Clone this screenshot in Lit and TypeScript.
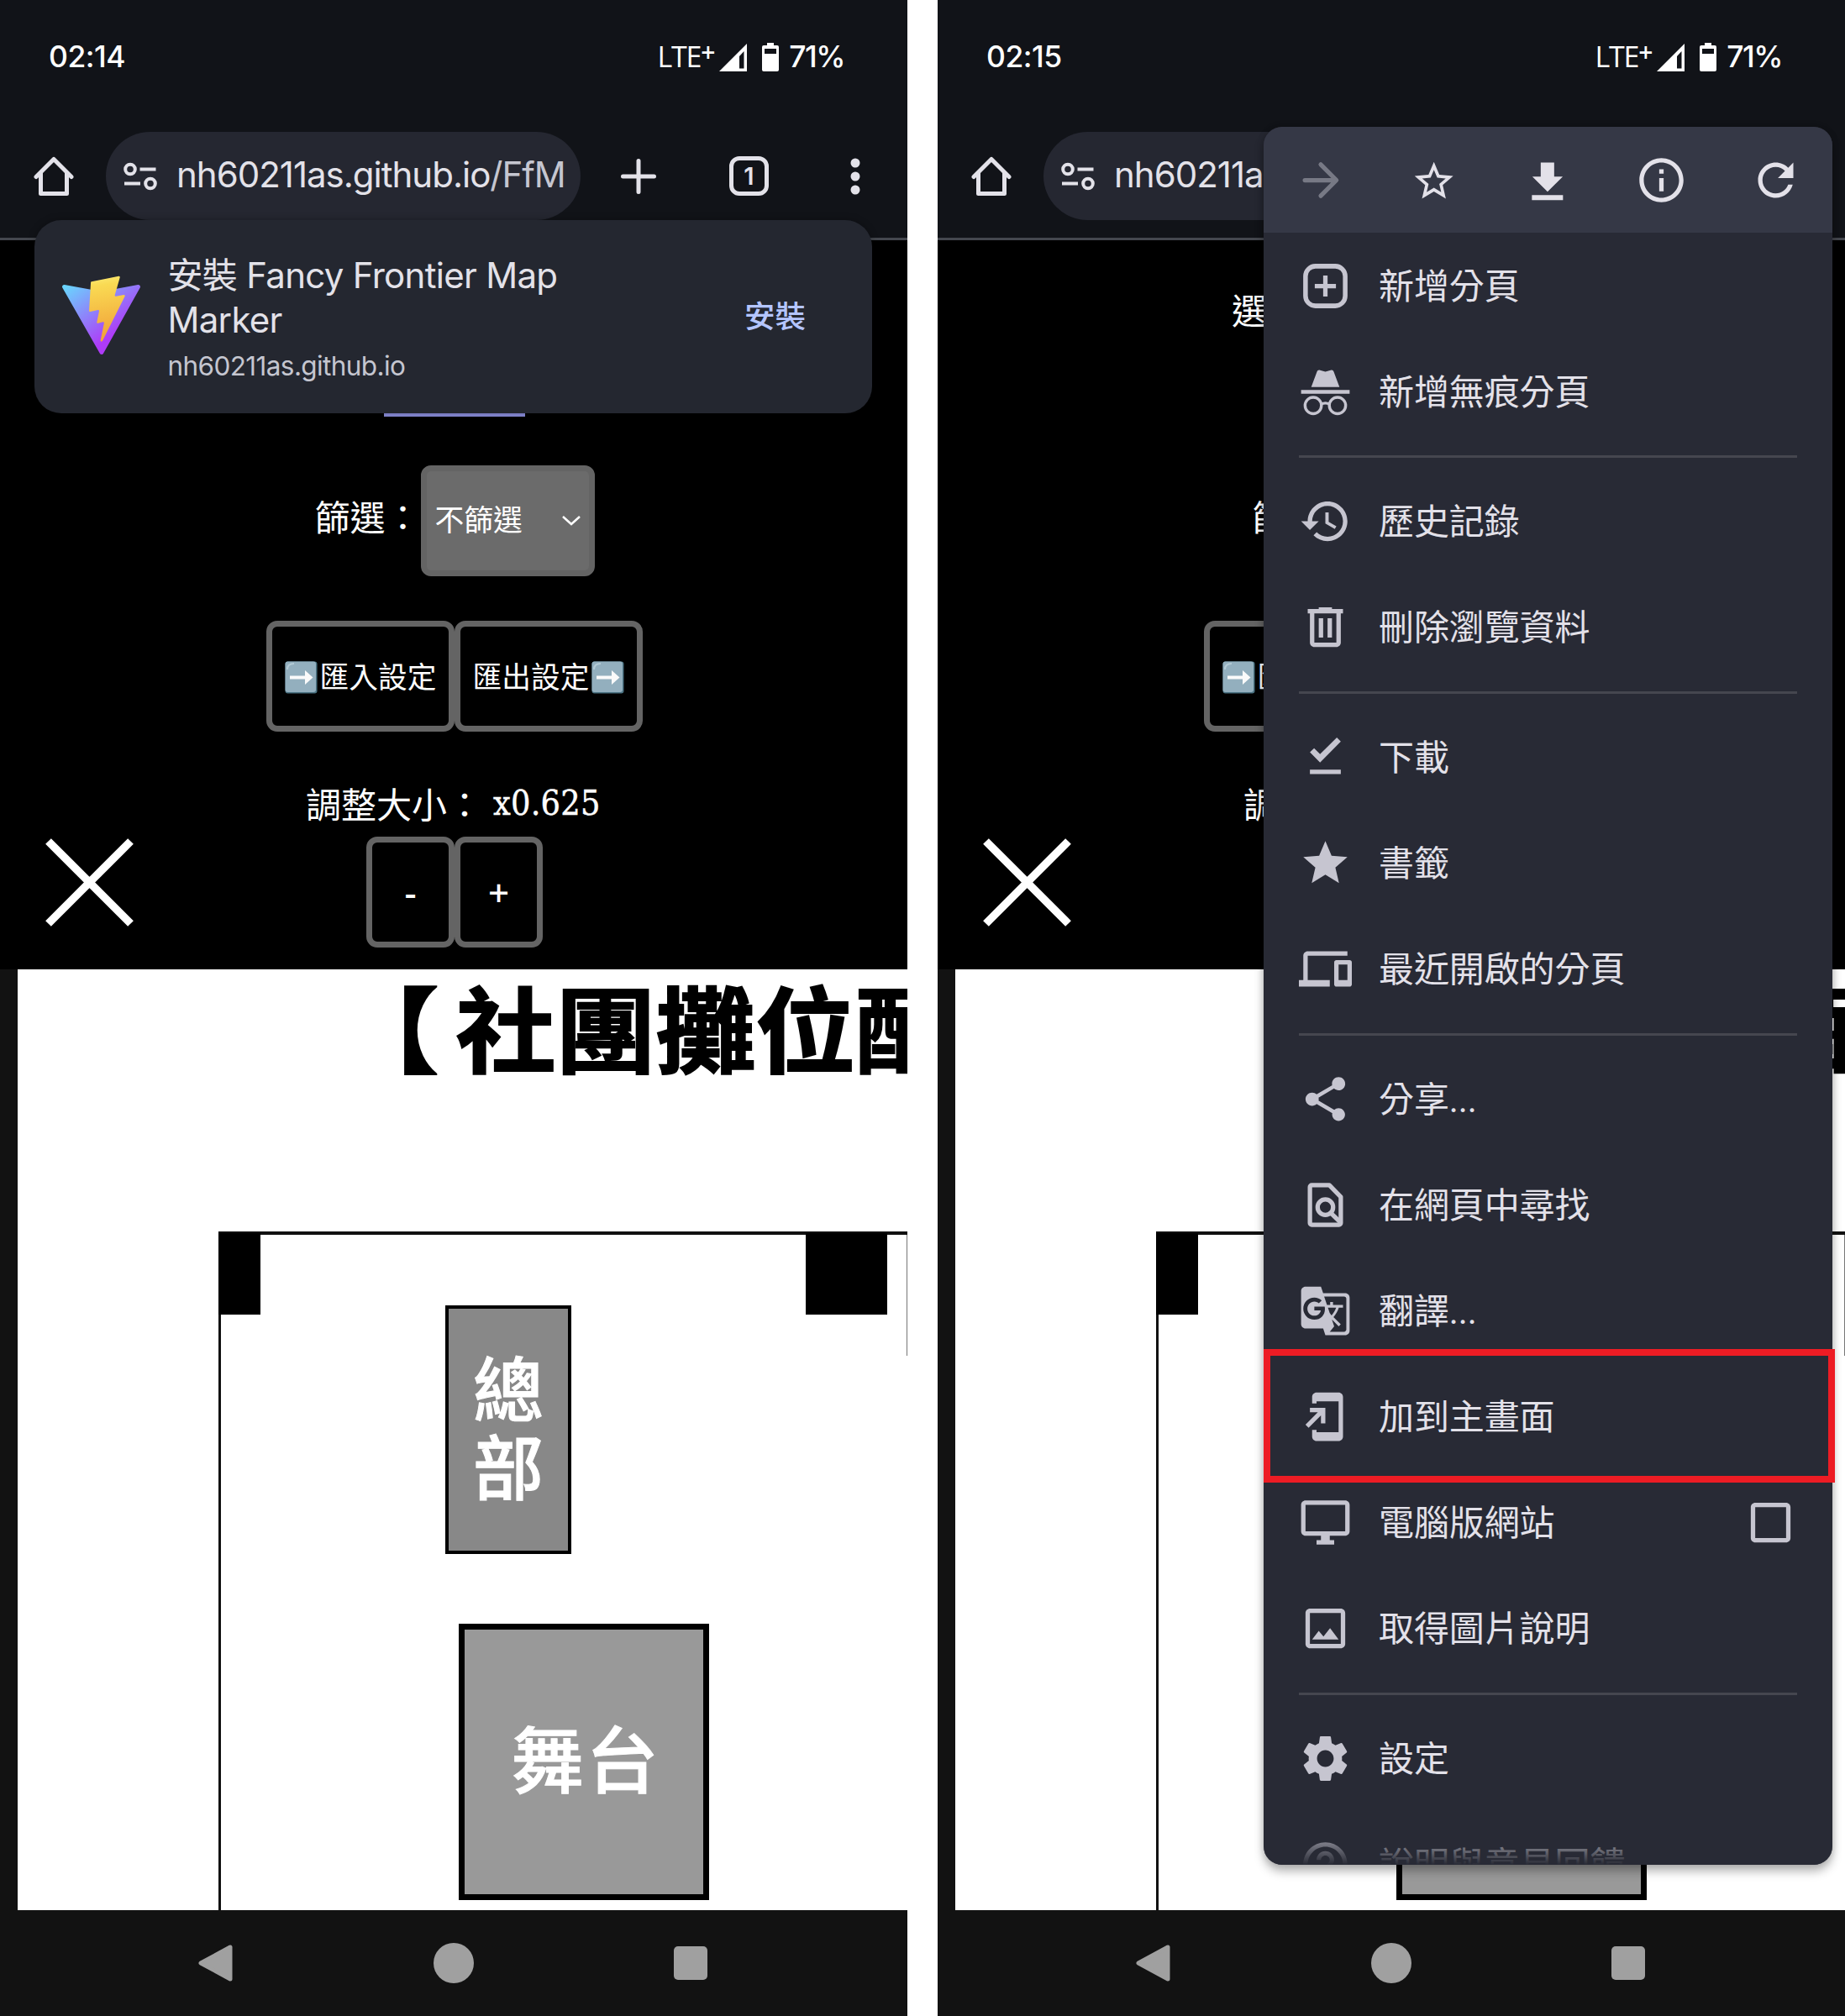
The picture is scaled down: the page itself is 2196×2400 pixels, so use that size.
import { LitElement, html, svg, css } from "lit";
import { customElement, property } from "lit/decorators.js";

const icon = (name: string) => {
  const body: Record<string, unknown> = {
    forward: svg`<path d="M5 12H19M12.2 4.9 19.3 12l-7.1 7.1" fill="none" stroke="currentColor" stroke-width="2" stroke-linecap="round" stroke-linejoin="round"/>`,
    starLine: svg`<path d="M22 9.24l-7.19-.62L12 2 9.19 8.63 2 9.24l5.46 4.73L5.82 21 12 17.27 18.18 21l-1.63-7.03L22 9.24zM12 15.4l-3.76 2.27 1-4.28-3.32-2.88 4.38-.38L12 6.1l1.71 4.04 4.38.38-3.32 2.88 1 4.28L12 15.4z" transform="translate(1.2 2) scale(.875)"/>`,
    save: svg`<path d="M18.700 10.400h-3.900V4H8.700v6.400H4.900l6.900 6.800zM4.700 18.800v2.200h14.100v-2.200z" />`,
    info: svg`<path d="M11 7h2v2h-2zm0 4h2v6h-2zm1-9C6.480 2 2 6.480 2 12s4.480 10 10 10 10-4.480 10-10S17.520 2 12 2zm0 18c-4.410 0-8-3.590-8-8s3.590-8 8-8 8 3.590 8 8-3.590 8-8 8z"/>`,
    reload: svg`<path d="M17.650 6.350C16.200 4.900 14.210 4 12 4c-4.420 0-7.990 3.580-7.990 8s3.570 8 7.990 8c3.730 0 6.840-2.550 7.730-6h-2.080c-.82 2.330-3.040 4-5.650 4-3.310 0-6-2.690-6-6s2.690-6 6-6c1.660 0 3.140.69 4.220 1.780L13 11h7V4l-2.350 2.350z"/>`,
    newTab: svg`<rect x="3" y="3" width="18" height="18" rx="4.500" fill="none" stroke="currentColor" stroke-width="2.100"/><path d="M11 7.200h2V11h3.800v2H13v3.800h-2V13H7.200v-2H11z"/>`,
    incognito: svg`<path d="M8.200 2.900C8.400 2.200 9 1.900 9.600 2.200L12 2.900l2.400-.7c.6-.3 1.200 0 1.400.7L18.400 9.800H5.600zM1 11.100h22v1.800H1z"/><g fill="none" stroke="currentColor" stroke-width="1.300"><circle cx="6.500" cy="18.200" r="3.700"/><circle cx="17.500" cy="18.200" r="3.700"/><path d="M10.100 17.600q1.900-1 3.800 0"/></g>`,
    history: svg`<path d="M13 3c-4.970 0-9 4.030-9 9H1l3.890 3.890.07.14L9 12H6c0-3.870 3.130-7 7-7s7 3.130 7 7-3.130 7-7 7c-1.930 0-3.680-.79-4.940-2.060l-1.420 1.420C8.270 19.990 10.510 21 13 21c4.970 0 9-4.030 9-9s-4.030-9-9-9zm-1 5v5l4.280 2.540.72-1.210-3.500-2.080V8H12z"/>`,
    trash: svg`<path d="M15 3.800V3H9v.8H4v2h1V19c0 1.100.9 2 2 2h10c1.100 0 2-.9 2-2V5.800h1v-2zM17 19H7V5.800h10zM9 8h2v8.800H9zm4 0h2v8.800h-2z"/>`,
    done: svg`<path d="M19 4.900 17.200 3 9.600 10.600 6.900 7.900 5 9.700l4.600 4.700zM5 17.600h14v2H5z" />`,
    star: svg`<path d="M12 17.270 18.180 21l-1.640-7.030L22 9.240l-7.190-.61L12 2 9.190 8.630 2 9.240l5.460 4.730L5.820 21z"/>`,
    devices: svg`<path d="M4 6h18V4H4c-1.100 0-2 .9-2 2v11H0v3h14v-3H4V6zm19 2h-6c-.55 0-1 .45-1 1v10c0 .55.45 1 1 1h6c.55 0 1-.45 1-1V9c0-.55-.45-1-1-1zm-1 9h-4v-7h4v7z"/>`,
    share: svg`<path d="M18 16.080c-.76 0-1.440.3-1.960.77L8.910 12.700c.05-.23.090-.46.090-.7s-.040-.47-.090-.7l7.050-4.110c.54.5 1.250.81 2.040.81 1.660 0 3-1.340 3-3s-1.340-3-3-3-3 1.340-3 3c0 .24.040.47.090.7L8.040 9.810C7.500 9.310 6.790 9 6 9c-1.660 0-3 1.340-3 3s1.340 3 3 3c.79 0 1.500-.31 2.040-.81l7.120 4.160c-.05.21-.08.43-.08.65 0 1.610 1.310 2.920 2.920 2.920s2.920-1.310 2.920-2.920-1.310-2.920-2.920-2.920z"/>`,
    find: svg`<path d="M13.800 3 19 8.300V20.200c0 .4-.4.8-.8.800H5.800c-.4 0-.8-.4-.8-.8V3.800c0-.4.4-.8.800-.8z" fill="none" stroke="currentColor" stroke-width="2" stroke-linejoin="round"/><circle cx="12" cy="13" r="3.500" fill="none" stroke="currentColor" stroke-width="2"/><path d="m14.300 15.500 4.600 4.400" stroke="currentColor" stroke-width="2"/>`,
    translate: svg`<path d="M21 4H11l-1-3H3c-1.100 0-2 .9-2 2v15c0 1.100.9 2 2 2h8l1 3h9c1.100 0 2-.9 2-2V6c0-1.100-.9-2-2-2zM7 16c-2.760 0-5-2.240-5-5s2.240-5 5-5c1.350 0 2.480.5 3.350 1.300L9.030 8.570c-.38-.36-1.040-.78-2.030-.78-1.740 0-3.150 1.440-3.150 3.210S5.260 14.210 7 14.210c2.010 0 2.840-1.440 2.920-2.410H7v-1.710h4.680c.07.31.12.61.12 1.020C11.800 13.970 9.890 16 7 16zm6.170-5.420h3.700c-.43 1.250-1.110 2.430-2.050 3.470-.31-.35-.6-.72-.86-1.100l-.79-2.370zm8.330 9.920c0 .55-.45 1-1 1H14l2-2.500-1.040-3.100 3.100 3.100.92-.92-3.300-3.250.02-.02c1.130-1.250 1.930-2.690 2.400-4.220H20v-1.300h-4.530V8h-1.290v1.290h-1.440L11.460 5.500h9.040c.55 0 1 .45 1 1v14z"/>`,
    addHome: svg`<path d="M18 1H8c-1.100 0-2 .9-2 2v3h2V5h10v14H8v-1H6v3c0 1.100.9 2 2 2h10c1.100 0 2-.9 2-2V3c0-1.100-.9-2-2-2zM10 15h2V8H5v2h3.590L3 15.590 4.410 17 10 11.410V15z"/>`,
    desktop: svg`<path d="M21 2H3c-1.100 0-2 .9-2 2v12c0 1.100.9 2 2 2h7v2H8v2h8v-2h-2v-2h7c1.100 0 2-.9 2-2V4c0-1.100-.9-2-2-2zm0 14H3V4h18v12z"/>`,
    image: svg`<path d="M19 5v14H5V5h14m0-2H5c-1.100 0-2 .9-2 2v14c0 1.100.9 2 2 2h14c1.100 0 2-.9 2-2V5c0-1.100-.9-2-2-2zm-4.860 8.860-3 3.870L9 13.140 6 17h12l-3.860-5.140z"/>`,
    settings: svg`<path d="M19.140 12.940c.04-.3.060-.61.060-.94 0-.32-.02-.64-.07-.94l2.030-1.580c.18-.14.23-.41.12-.61l-1.920-3.320c-.12-.22-.37-.29-.59-.22l-2.390.96c-.5-.38-1.030-.7-1.620-.94L14.400 2.810c-.04-.24-.24-.41-.48-.41h-3.840c-.24 0-.43.17-.47.41L9.250 5.350c-.59.24-1.130.57-1.620.94L5.240 5.330c-.22-.08-.47 0-.59.22L2.740 8.870c-.12.21-.08.47.12.61l2.030 1.580c-.05.3-.09.63-.09.94s.02.64.07.94l-2.030 1.580c-.18.14-.23.41-.12.61l1.920 3.320c.12.22.37.29.59.22l2.390-.96c.5.38 1.030.7 1.620.94l.36 2.540c.05.24.24.41.48.41h3.840c.24 0 .44-.17.47-.41l.36-2.540c.59-.24 1.130-.56 1.620-.94l2.390.96c.22.08.47 0 .59-.22l1.920-3.320c.12-.22.07-.47-.12-.61l-2.010-1.580zM12 15.600c-1.980 0-3.600-1.620-3.600-3.600s1.620-3.600 3.600-3.600 3.600 1.620 3.600 3.600-1.620 3.600-3.600 3.600z" transform="translate(-.6 -.6) scale(1.050)"/>`,
    help: svg`<path d="M11 18h2v-2h-2v2zm1-16C6.480 2 2 6.480 2 12s4.480 10 10 10 10-4.480 10-10S17.520 2 12 2zm0 18c-4.410 0-8-3.590-8-8s3.590-8 8-8 8 3.590 8 8-3.590 8-8 8zm0-14c-2.210 0-4 1.790-4 4h2c0-1.100.9-2 2-2s2 .9 2 2c0 2-3 1.750-3 5h2c0-2.250 3-2.500 3-5 0-2.210-1.790-4-4-4z"/>`,
    checkbox: svg`<path d="M19 5v14H5V5h14m0-2H5c-1.100 0-2 .9-2 2v14c0 1.100.9 2 2 2h14c1.100 0 2-.9 2-2V5c0-1.100-.9-2-2-2z"/>`,
  };
  return html`<svg class="icon" viewBox="0 0 24 24" fill="currentColor">${body[name]}</svg>`;
};

type Item = { icon: string; label: string; checkbox?: boolean };
const GROUPS: Item[][] = [
  [
    { icon: "newTab", label: "新增分頁" },
    { icon: "incognito", label: "新增無痕分頁" },
  ],
  [
    { icon: "history", label: "歷史記錄" },
    { icon: "trash", label: "刪除瀏覽資料" },
  ],
  [
    { icon: "done", label: "下載" },
    { icon: "star", label: "書籤" },
    { icon: "devices", label: "最近開啟的分頁" },
  ],
  [
    { icon: "share", label: "分享..." },
    { icon: "find", label: "在網頁中尋找" },
    { icon: "translate", label: "翻譯..." },
    { icon: "addHome", label: "加到主畫面" },
    { icon: "desktop", label: "電腦版網站", checkbox: true },
    { icon: "image", label: "取得圖片說明" },
  ],
  [
    { icon: "settings", label: "設定" },
    { icon: "help", label: "說明與意見回饋" },
  ],
];

@customElement("browser-menu")
export class BrowserMenu extends LitElement {
  static styles = css`
    :host { display: block; box-sizing: border-box; font-family: Roboto, "Noto Sans CJK TC", sans-serif; }
    .menu { position: relative; width: 677px; height: 2069px; border-radius: 22px; background: #282a35; color: #e3e1e9; box-shadow: 0 8px 12px rgba(0, 0, 0, .28), 0 0 8px rgba(0, 0, 0, .14); }
    .clip { height: 100%; overflow: hidden; border-radius: 22px; }
    .head { display: flex; height: 126px; background: #353846; color: #e3e1e9; }
    .cell { flex: 1; display: flex; align-items: center; justify-content: center; }
    .dim { color: #777985; }
    .icon { width: 63px; height: 63px; display: block; flex: none; }
    .row { display: flex; align-items: center; height: 126px; padding: 0 42px; gap: 32px; font-size: 42px; line-height: 60px; white-space: nowrap; }
    .row .icon { color: #c6c5d0; }
    .label { flex: 1; padding-top: 3px; letter-spacing: -.1px; }
    .divider { height: 3px; margin: 13px 42px 12.900px; background: #45464f; }
    .fade { position: absolute; left: 0; right: 0; bottom: 0; height: 44px; border-radius: 0 0 22px 22px; background: linear-gradient(rgba(40, 42, 53, .1), #282a35); }
    .mark { position: absolute; left: 0; top: 1455px; width: 680px; height: 159px; box-sizing: border-box; border: 8px solid #ed1c24; }
  `;
  render() {
    return html`<div class="menu">
      <div class="clip">
        <div class="head">
          <div class="cell dim">${icon("forward")}</div>
          ${["starLine", "save", "info", "reload"].map((n) => html`<div class="cell">${icon(n)}</div>`)}
        </div>
        ${GROUPS.map(
          (g, i) => html`${i ? html`<div class="divider"></div>` : ""}
          ${g.map((r) => html`<div class="row">${icon(r.icon)}<span class="label">${r.label}</span>${r.checkbox ? icon("checkbox") : ""}</div>`)}`
        )}
      </div>
      <div class="fade"></div>
      <div class="mark"></div>
    </div>`;
  }
}

@customElement("install-card")
export class InstallCard extends LitElement {
  static styles = css`
    :host { display: block; font-family: Inter, "Noto Sans CJK TC", sans-serif; }
    .card { box-sizing: border-box; width: 997px; height: 230px; border-radius: 32px; background: #242730; display: flex; align-items: center; padding: 0 79px 0 33px; box-shadow: 0 0 10px rgba(0, 0, 0, .3); }
    .logo { width: 93px; height: 95px; flex: none; margin-bottom: 3px; }
    .body { flex: 1; margin-left: 32.500px; color: #e3e2e9; padding-top: 4px; }
    .title { font-size: 42px; line-height: 53px; letter-spacing: -.7px; white-space: nowrap; }
    .site { font-size: 31.500px; line-height: 44px; margin-top: 7px; color: #c5c6d0; letter-spacing: -.6px; }
    .install { font-size: 36.500px; line-height: 50px; color: #b4c5ff; font-weight: 500; }
  `;
  render() {
    return html`<div class="card">
      <svg class="logo" viewBox="0 0 256 257">
        <defs>
          <linearGradient id="a" x1="-.828%" x2="57.636%" y1="7.652%" y2="78.411%"><stop offset="0%" stop-color="#6AD4FD"/><stop offset="100%" stop-color="#AE3BF7"/></linearGradient>
          <linearGradient id="b" x1="43.376%" x2="50.316%" y1="2.242%" y2="89.030%"><stop offset="0%" stop-color="#FBE56A"/><stop offset="12%" stop-color="#F9DA53"/><stop offset="100%" stop-color="#F2A53A"/></linearGradient>
        </defs>
        <path fill="url(#a)" d="M255.153 37.938 134.897 252.976c-2.483 4.440-8.862 4.466-11.382.048L.875 37.958c-2.746-4.814 1.371-10.646 6.827-9.670l120.385 21.517a6.537 6.537 0 0 0 2.322-.004l117.867-21.483c5.438-.991 9.574 4.796 6.877 9.620Z"/>
        <path fill="url(#b)" d="M185.432.063 96.440 17.501a3.268 3.268 0 0 0-2.634 3.014l-5.474 92.456a3.268 3.268 0 0 0 3.997 3.378l24.777-5.718c2.318-.535 4.413 1.507 3.936 3.838l-7.361 36.047c-.495 2.426 1.782 4.500 4.151 3.780l15.304-4.649c2.372-.720 4.652 1.360 4.150 3.788l-11.698 56.621c-.732 3.542 3.979 5.473 5.943 2.437l1.313-2.028 72.516-144.720c1.215-2.423-.880-5.186-3.540-4.672l-25.505 4.922c-2.396.462-4.435-1.770-3.759-4.114l16.646-57.705c.677-2.350-1.370-4.583-3.769-4.113Z"/>
      </svg>
      <div class="body">
        <div class="title">安裝 Fancy Frontier Map</div>
        <div class="title">Marker</div>
        <div class="site">nh60211as.github.io</div>
      </div>
      <div class="install">安裝</div>
    </div>`;
  }
}

@customElement("phone-screen")
export class PhoneScreen extends LitElement {
  @property() time = "";
  @property() overlay = "";
  static styles = css`
    :host { display: block; width: 1080px; height: 2400px; position: relative; overflow: hidden; font-family: Inter, "Noto Sans CJK TC", sans-serif; background: #000; color: #fff; }
    .top { box-sizing: border-box; height: 286px; background: #111318; border-bottom: 3px solid #44474e; }
    .status { height: 136px; box-sizing: border-box; padding: 0 75px 0 58px; display: flex; align-items: center; font-size: 35.500px; font-weight: 500; line-height: 40px; letter-spacing: -.5px; }
    .clock { flex: 1; }
    .lte { font-family: "Open Sans", sans-serif; font-weight: 400; font-size: 34px; letter-spacing: -1.200px; }
    .sup { font-size: 30px; position: relative; top: -7px; font-weight: 600; }
    .signal { width: 33px; height: 33px; margin-left: 6px; }
    .battery { width: 20px; height: 34px; margin: 0 12px 0 18px; }
    .pct { letter-spacing: -1.500px; }
    .bar { height: 147px; display: flex; align-items: center; color: #e3e2e9; }
    .home { width: 48px; height: 48px; margin-left: 39.500px; }
    .pill { box-sizing: border-box; width: 565px; height: 105px; margin-left: 38.500px; border-radius: 53px; background: #252731; display: flex; align-items: center; padding-left: 21px; }
    .tune { width: 40px; height: 34px; }
    .url { margin-left: 23px; padding-bottom: 3px; font-size: 42px; line-height: 56px; letter-spacing: -1px; white-space: nowrap; }
    .path { color: #c5c6d0; }
    .plus { width: 42px; height: 42px; margin-left: 47.500px; }
    .tab { box-sizing: border-box; width: 47px; height: 47px; margin-left: 87.500px; border: 5px solid; border-radius: 12px; display: flex; align-items: center; justify-content: center; font-size: 29px; font-weight: 600; line-height: 30px; }
    .dots { width: 12px; height: 44px; margin-left: 96.500px; }
    .page { height: 868px; position: relative; font-family: "Noto Sans CJK TC", sans-serif; font-size: 42px; line-height: 60px; display: flex; flex-direction: column; }
    .pick { padding: 52px 0 0 350px; height: 152px; box-sizing: border-box; }
    .underline { width: 168px; height: 58px; margin-left: 457px; box-sizing: border-box; border-bottom: 4px solid #8b8ddc; }
    .line { display: flex; justify-content: center; align-items: center; }
    .filter { margin-top: 58px; height: 132px; padding: 0 0 0 2px; }
    .filter .name { padding-bottom: 13px; }
    .select { box-sizing: border-box; width: 207px; height: 132px; border: 7px solid #646464; border-radius: 12px; background: #6b6b6b; display: flex; align-items: center; font-size: 34.800px; padding: 0 10px 7px 10px; justify-content: space-between; }
    .chev { width: 22px; height: 13px; margin-top: 6px; }
    .io { margin-top: 53px; padding-left: 2px; }
    .btn { box-sizing: border-box; height: 132px; border: 7px solid #646464; border-radius: 13px; display: flex; align-items: center; justify-content: center; font-size: 34.700px; }
    .wide { width: 224px; gap: 3px; }
    .wide span { padding-bottom: 2px; }
    .arrow { width: 39px; height: 39px; flex: none; margin-top: 2px; }
    .size { margin-top: 55px; height: 60px; justify-content: flex-start; padding-left: 364px; }
    .factor { font-family: "DejaVu Serif Condensed", "DejaVu Serif", serif; font-stretch: condensed; font-size: 41px; margin-left: 13px; letter-spacing: .2px; -webkit-text-stroke: .4px #fff; }
    .zoom { margin-top: 10px; padding-left: 2px; }
    .small { width: 105px; font-family: "Noto Sans", sans-serif; font-weight: 500; font-size: 44px; padding-bottom: 1px; }
    .close { position: absolute; left: 54px; top: 712px; width: 105px; height: 105px; }
    .map { position: relative; height: 1120px; overflow: hidden; background: #fff; border-left: 21px solid #121212; color: #000; font-family: "Noto Sans CJK TC", sans-serif; }
    .map > * { position: absolute; box-sizing: border-box; }
    .heading { left: 402px; top: -16px; font-size: 111px; font-weight: 700; line-height: 165px; white-space: nowrap; transform: scaleX(1.070); transform-origin: 0 50%; display: flex; -webkit-text-stroke: 2px #000; }
    .bracket { width: 112px; margin: 0 19px 0 -19px; text-align: right; }
    .hall { left: 239px; top: 312px; width: 860px; height: 900px; border: 3px solid #111; border-top-width: 4px; }
    .pillar { top: 314px; height: 97px; background: #000; }
    .p1 { left: 239px; width: 50px; }
    .p2 { left: 938px; width: 97px; }
    .edge { left: 1058px; top: 316px; width: 1px; height: 144px; background: #777; }
    .hq { left: 509px; top: 400px; width: 150px; height: 296px; border: 4px solid #000; background: #888; color: #fff; font-weight: 500; font-size: 84px; line-height: 93px; display: flex; flex-direction: column; align-items: center; justify-content: center; padding-bottom: 12px; -webkit-text-stroke: 1px #fff; }
    .stage { left: 525px; top: 779px; width: 298px; height: 329px; border: 7px solid #000; background: #999; color: #fff; font-weight: 500; font-size: 86px; letter-spacing: 3px; display: flex; align-items: center; justify-content: center; padding: 0 0 15px 5px; -webkit-text-stroke: 1px #fff; }
    .nav { height: 126px; background: #121212; display: flex; align-items: center; color: #a0a0a0; }
    .back { width: 41px; height: 44px; margin-left: 236px; }
    .circle { width: 48px; height: 48px; border-radius: 50%; background: #a0a0a0; margin-left: 239px; }
    .square { width: 40px; height: 40px; border-radius: 5px; background: #a0a0a0; margin-left: 238px; }
    .overlay { position: absolute; }
    .card { left: 41px; top: 262px; }
    .menu { left: 388px; top: 151px; }
  `;
  private arrow() {
    return html`<svg class="arrow" viewBox="0 0 39 39"><rect x=".5" y=".5" width="38" height="38" rx="3" fill="#4b7383"/><rect x=".5" y=".5" width="36.500" height="36.500" rx="3" fill="#93afbe"/><path d="M3 10q0-7 8-7" fill="none" stroke="#b4cbd6" stroke-width="2"/><path d="M6 17.500h18v-6.500l9.500 8.500-9.500 8.500v-6.500H6z" fill="#fafafa"/></svg>`;
  }
  render() {
    return html`
      <div class="top">
        <div class="status">
          <span class="clock">${this.time}</span>
          <span class="lte">LTE<span class="sup">+</span></span>
          <svg class="signal" viewBox="0 0 33 33"><path d="M33 0V33H0zM29.500 9 24 15V29.500H29.500z" fill="#fff" fill-rule="evenodd"/></svg>
          <svg class="battery" viewBox="0 0 20 34"><path d="M6 0h8v3h4a2 2 0 0 1 2 2V32a2 2 0 0 1-2 2H2a2 2 0 0 1-2-2V5a2 2 0 0 1 2-2H6zM3 7v6h14V7z" fill="#fff" fill-rule="evenodd"/></svg>
          <span class="pct">71%</span>
        </div>
        <div class="bar">
          <svg class="home" viewBox="0 0 48 48" fill="none" stroke="currentColor" stroke-width="5" stroke-linejoin="round" stroke-linecap="round"><path d="M3 24.500 24 3.500 45 24.500M8.500 20V44.500H39.500V20"/></svg>
          <div class="pill">
            <svg class="tune" viewBox="0 0 40 34" fill="none" stroke="currentColor" stroke-width="4"><circle cx="8" cy="8.500" r="5.800"/><circle cx="32" cy="25.500" r="5.800"/><path d="M19.500 8.500H38.500M1 25.500H20"/></svg>
            <span class="url">nh60211as.github.io<span class="path">/FfM</span></span>
          </div>
          <svg class="plus" viewBox="0 0 42 42" stroke="currentColor" stroke-width="5" stroke-linecap="round"><path d="M21 2.500V39.500M2.500 21H39.500"/></svg>
          <div class="tab">1</div>
          <svg class="dots" viewBox="0 0 12 44" fill="currentColor"><circle cx="6" cy="6" r="5.500"/><circle cx="6" cy="22" r="5.500"/><circle cx="6" cy="38" r="5.500"/></svg>
        </div>
      </div>
      <div class="page">
        <div class="pick">選</div>
        <div class="underline"></div>
        <div class="line filter">
          <span class="name">篩選：</span>
          <div class="select">不篩選<svg class="chev" viewBox="0 0 22 13"><path d="M1 2 11 11 21 2" fill="none" stroke="#fff" stroke-width="2.500"/></svg></div>
        </div>
        <div class="line io">
          <div class="btn wide">${this.arrow()}<span>匯入設定</span></div>
          <div class="btn wide"><span>匯出設定</span>${this.arrow()}</div>
        </div>
        <div class="line size"><span>調整大小：</span><span class="factor">x0.625</span></div>
        <div class="line zoom"><div class="btn small">-</div><div class="btn small">+</div></div>
        <svg class="close" viewBox="0 0 105 105"><path d="M3.500 3.500 101.500 101.500M101.500 3.500 3.500 101.500" stroke="#fff" stroke-width="9.500"/></svg>
      </div>
      <div class="map">
        <div class="heading"><span class="bracket">【</span><span>社團攤位配</span></div>
        <div class="hall"></div>
        <div class="pillar p1"></div>
        <div class="pillar p2"></div>
        <div class="edge"></div>
        <div class="hq"><span>總</span><span>部</span></div>
        <div class="stage">舞台</div>
      </div>
      <div class="nav">
        <svg class="back" viewBox="0 0 41 44"><path d="M3 22 38 3V41z" fill="#a0a0a0" stroke="#a0a0a0" stroke-width="5" stroke-linejoin="round"/></svg>
        <div class="circle"></div>
        <div class="square"></div>
      </div>
      ${this.overlay === "install" ? html`<install-card class="overlay card"></install-card>` : html`<browser-menu class="overlay menu"></browser-menu>`}
    `;
  }
}

@customElement("app-root")
export class AppRoot extends LitElement {
  static styles = css`
    :host { display: block; }
    .screens { display: flex; gap: 36px; width: 2196px; height: 2400px; background: #fff; overflow: hidden; }
  `;
  render() {
    return html`<div class="screens">
      <phone-screen time="02:14" overlay="install"></phone-screen>
      <phone-screen time="02:15" overlay="menu"></phone-screen>
    </div>`;
  }
}
